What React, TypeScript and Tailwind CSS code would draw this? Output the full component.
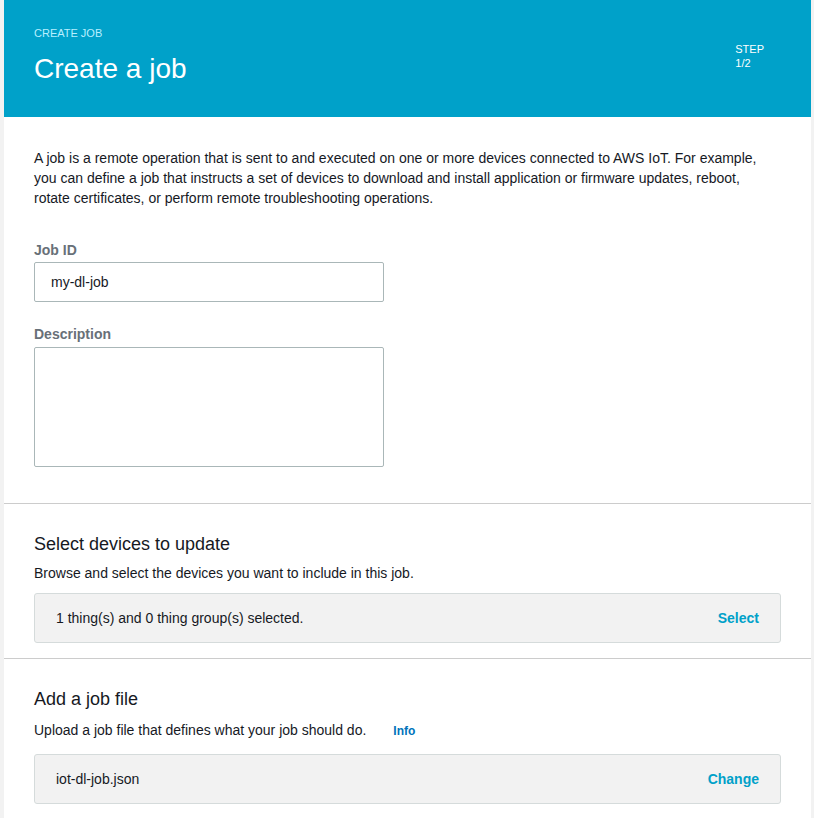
export default function App() {
  return (
    <div className="min-h-[818px] bg-[#f2f2f2] font-['Liberation_Sans',Arial,sans-serif] text-[#16191f]">
      <div className="ml-[4px] w-[807px] bg-white">
        <header className="flex h-[117px] justify-between bg-[#00a1c9] pl-[30px] pr-[47px]">
          <div className="pt-[26px]">
            <div className="text-[11px] leading-[14px] text-[#b8efff]">CREATE JOB</div>
            <h1 className="mt-[12px] text-[28px] leading-[34px] text-white">Create a job</h1>
          </div>
          <div className="pt-[42px] text-[11px] leading-[14px] text-white">
            <div>STEP</div>
            <div>1/2</div>
          </div>
        </header>

        <section className="border-b border-[#cccccc] px-[30px] pb-[36px] pt-[31px]">
          <p className="text-[14px] leading-[20px]">
            A job is a remote operation that is sent to and executed on one or more devices connected to AWS IoT. For example,
            <br />
            you can define a job that instructs a set of devices to download and install application or firmware updates, reboot,
            <br />
            rotate certificates, or perform remote troubleshooting operations.
          </p>

          <label className="mt-[32px] block text-[14px] font-bold leading-[20px] text-[#687078]">Job ID</label>
          <div className="mt-[2px] flex h-[40px] w-[350px] items-center rounded-[2px] border border-[#aab7b8] px-[16px] text-[14px]">
            my-dl-job
          </div>

          <label className="mt-[22px] block text-[14px] font-bold leading-[20px] text-[#687078]">Description</label>
          <div className="mt-[3px] h-[120px] w-[350px] rounded-[2px] border border-[#aab7b8]" />
        </section>

        <section className="border-b border-[#cccccc] px-[30px] pb-[15px] pt-[28px]">
          <h2 className="text-[18px] leading-[24px]">Select devices to update</h2>
          <p className="mt-[7px] text-[14px] leading-[20px]">Browse and select the devices you want to include in this job.</p>
          <div className="mt-[10px] flex h-[50px] items-center justify-between rounded-[3px] border border-[#d5dbdb] bg-[#f2f2f2] px-[21px] text-[14px]">
            <span>1 thing(s) and 0 thing group(s) selected.</span>
            <span className="font-bold text-[#00a1c9]">Select</span>
          </div>
        </section>

        <section className="px-[30px] pb-[14px] pt-[28px]">
          <h2 className="text-[18px] leading-[24px]">Add a job file</h2>
          <p className="mt-[9px] text-[14px] leading-[20px]">
            Upload a job file that defines what your job should do.
            <span className="ml-[27px] text-[12px] font-bold text-[#0073bb]">Info</span>
          </p>
          <div className="mt-[13px] flex h-[50px] items-center justify-between rounded-[3px] border border-[#d5dbdb] bg-[#f2f2f2] px-[21px] text-[14px]">
            <span>iot-dl-job.json</span>
            <span className="font-bold text-[#00a1c9]">Change</span>
          </div>
        </section>
      </div>
    </div>
  );
}
